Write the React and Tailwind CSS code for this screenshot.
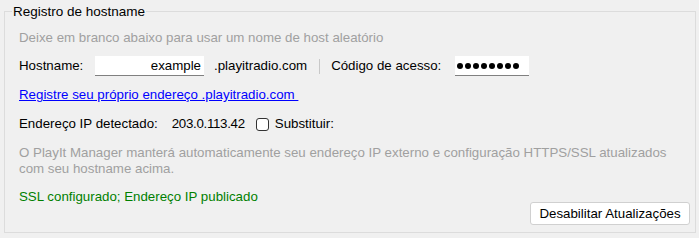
export default function App() {
  return (
    <div className="h-[238px] w-[699px] bg-[#f0f0f0] pl-[4px] pt-[11px] font-['Liberation_Sans',Arial,sans-serif] text-[13.3px] leading-[16px] text-black">
      <div className="relative h-[222px] w-[692px] border border-[#dcdcdc] pl-[14px] pr-[5px]">
        <span className="absolute left-[7px] top-[-8px] bg-[#f0f0f0] px-[1px] text-[13.5px]">Registro de hostname</span>

        <p className="mt-[18px] text-[#a0a0a0]">Deixe em branco abaixo para usar um nome de host aleatório</p>

        <div className="mt-[10px] flex h-[20px] items-center">
          <span className="w-[76px]">Hostname:</span>
          <div className="flex h-[20px] w-[109px] items-center justify-end border-b border-[#808080] bg-white pr-[3px]">example</div>
          <span className="ml-[10px]">.playitradio.com</span>
          <span className="ml-[12px] mr-[11px] h-[15px] w-px bg-[#c8c8c8]" />
          <span>Código de acesso:</span>
          <div className="ml-[14px] flex h-[20px] w-[74px] items-center gap-[2px] border-b border-[#808080] bg-white pl-[2px]">
            {Array.from({ length: 8 }).map((_, i) => (
              <span key={i} className="h-[6px] w-[6px] rounded-full bg-black" />
            ))}
          </div>
        </div>

        <a href="#" className="mt-[11px] block w-fit text-[#0000ff] underline">
          Registre seu próprio endereço .playitradio.com&nbsp;
        </a>

        <div className="mt-[13px] flex h-[16px] items-center">
          <span>Endereço IP detectado:</span>
          <span className="ml-[14px] tracking-[-0.3px]">203.0.113.42</span>
          <span className="ml-[11px] h-[13px] w-[13px] rounded-[3px] border border-[#333333] bg-white" />
          <span className="ml-[6px]">Substituir:</span>
        </div>

        <p className="mt-[13px] text-[#a0a0a0]">
          O PlayIt Manager manterá automaticamente seu endereço IP externo e configuração HTTPS/SSL atualizados
          <br />
          com seu hostname acima.
        </p>

        <p className="mt-[12px] text-[#008000]">SSL configurado; Endereço IP publicado</p>

        <div className="-mt-[3px] flex justify-end">
          <button className="h-[23px] w-[160px] rounded-[3px] border border-[#d0d0d0] bg-white text-[13.3px] leading-[16px]">
            Desabilitar Atualizações
          </button>
        </div>
      </div>
    </div>
  )
}
